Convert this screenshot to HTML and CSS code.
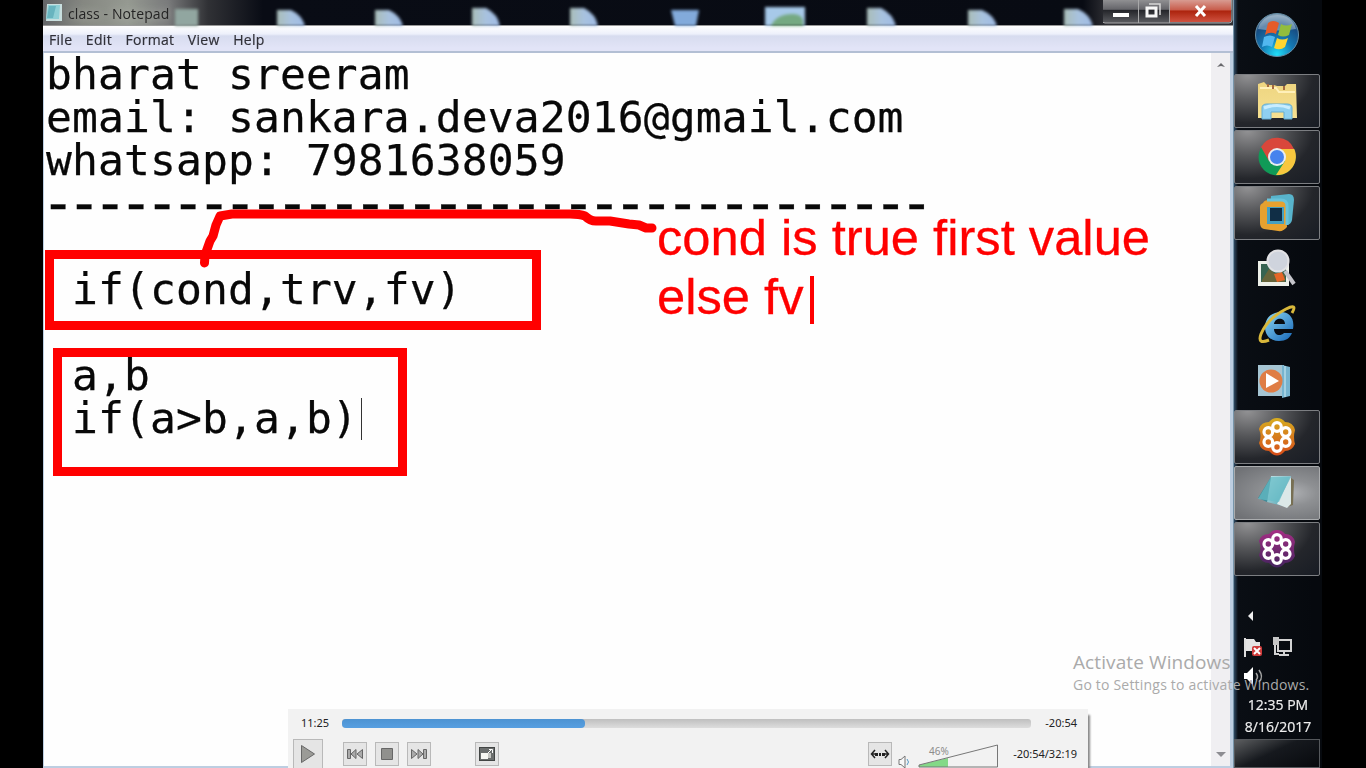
FILE: index.html
```html
<!DOCTYPE html>
<html lang="en">
<head>
<meta charset="utf-8">
<title>class - Notepad</title>
<link rel="stylesheet" href="styles.css">
</head>
<body>
<div class="screen">
  <main class="notepad">
    <header class="titlebar">
      <svg class="desktop" width="1190" height="26" viewBox="43 0 1190 26">
        <defs><linearGradient id="doc"><stop offset="0" stop-color="#a9bdb8"/><stop offset=".5" stop-color="#a8c2df"/><stop offset="1" stop-color="#9fbbe5"/></linearGradient></defs>
        <g fill="url(#doc)">
          <path d="M175 9h23v17h-23z" fill="#91a6a0"/>
          <path d="M277 10h14q11 5 14 16h-28z"/><path d="M375 10h14q11 5 14 16h-28z"/><path d="M472 8h14q12 6 14 18h-28z"/><path d="M570 8h14q12 6 14 18h-28z"/>
          <path d="M671 10h28l-3 16h-21z" fill="#82aadb"/>
          <path d="M765 7h40v19h-40z" fill="#a7c9e9"/><path d="M771 26q5-12 22-12 8 0 10 6v6z" fill="#75a982"/>
          <path d="M867 8h14q12 6 15 18h-29z"/><path d="M968 10h14q12 5 15 16h-29z"/><path d="M1064 9h14q12 5 15 17h-29z"/>
        </g>
      </svg>
      <svg class="app-icon" width="18" height="20" viewBox="0 0 18 20"><path d="M2 1h15v17H1z" fill="#c9dfdf"/><path d="M3 2h12l-1 14H1z" fill="#8fcfd5"/><path d="M4 3h7l-3 12H2z" fill="#68b4bf"/></svg>
      <h1 class="title">class - Notepad</h1>
      <div class="controls">
        <svg width="130" height="25" viewBox="0 0 130 25">
          <defs><linearGradient id="ctl" x2="0" y2="1"><stop stop-color="#99999b"/><stop offset=".45" stop-color="#65656a"/><stop offset=".5" stop-color="#25262b"/><stop offset="1" stop-color="#5c5d61"/></linearGradient><linearGradient id="cls" x2="0" y2="1"><stop stop-color="#d89b91"/><stop offset=".45" stop-color="#c85c4b"/><stop offset=".5" stop-color="#ac230d"/><stop offset="1" stop-color="#cf5240"/></linearGradient></defs>
          <path d="M-1-2h130v22q0 3-3 3H2q-3 0-3-3z" fill="url(#ctl)" stroke="#a9a9ab"/>
          <path d="M67 0h61v20q0 2-3 2H67z" fill="url(#cls)"/><path d="M35.500 0v23M66.500 0v23" stroke="#a8a8a9"/>
          <path d="M10 13h16v4H10z" fill="#fff"/>
          <path d="M44 8h9v8h-9z" fill="none" stroke="#f7f7f7" stroke-width="3"/><path d="M46 4h11v11" fill="none" stroke="#d7d7d7" stroke-width="1.500"/>
          <path d="M93 6l9 10M102 6l-9 10" stroke="#fff" stroke-width="3"/>
        </svg>
      </div>
    </header>
    <nav class="menu"><span>File</span><span>Edit</span><span>Format</span><span>View</span><span>Help</span></nav>
    <section class="document">
      <pre class="copy">bharat sreeram
email: sankara.deva2016@gmail.com
whatsapp: 7981638059
<span class="rule">----------------------------------</span>

 if(cond,trv,fv)

 a,b
 if(a&gt;b,a,b)<i class="caret"></i></pre>
      <aside class="scrollbar"><svg width="10" height="6" viewBox="0 0 10 6"><path d="M1 5l4-4 4 4-4-1z" fill="#68686c"/></svg><svg width="10" height="6" viewBox="0 0 10 6"><path d="M0 1h10L5 6z" fill="#8d8d92"/></svg></aside>
    </section>
  </main>
  <aside class="taskbar">
    <svg width="0" height="0" class="defs"><defs>
      <radialGradient id="orb" cx=".5" cy=".95" r=".95"><stop stop-color="#20def8"/><stop offset=".4" stop-color="#1579b3"/><stop offset=".75" stop-color="#174d83"/><stop offset="1" stop-color="#8ca5b8"/></radialGradient>
      <linearGradient id="folder" x2="0" y2="1"><stop stop-color="#eed580"/><stop offset="1" stop-color="#f5e092"/></linearGradient>
      <linearGradient id="ie" x2="1" y2="1"><stop stop-color="#8dd8f4"/><stop offset="1" stop-color="#1565b7"/></linearGradient>
      <linearGradient id="note" x2="1" y2="1"><stop stop-color="#c3e4e8"/><stop offset="1" stop-color="#479dac"/></linearGradient>
      <linearGradient id="gold" x2="0" y2="1"><stop stop-color="#d7ad20"/><stop offset="1" stop-color="#d64c19"/></linearGradient>
      <linearGradient id="purple" x2="0" y2="1"><stop stop-color="#a62e85"/><stop offset="1" stop-color="#44235f"/></linearGradient>
      <g id="petals" fill="none" stroke="#fff" stroke-width="3.200"><circle cx="20" cy="10" r="4.300"/><circle cx="28.700" cy="15" r="4.300"/><circle cx="28.700" cy="25" r="4.300"/><circle cx="20" cy="30" r="4.300"/><circle cx="11.300" cy="25" r="4.300"/><circle cx="11.300" cy="15" r="4.300"/></g>
    </defs></svg>
    <div class="start"><svg width="46" height="46" viewBox="0 0 46 46"><circle cx="23" cy="23" r="21.500" fill="url(#orb)" stroke="#648da6"/><path d="M4 17Q8 3 23 3t19 14q-19 3-38 0" fill="#c4d5e2" opacity=".45"/><path d="M14 11q5-4 11 0l-3 11q-6-3-11 1z" fill="#e55b2a"/><path d="M27 12q5 3 11 0l-3 11q-6 3-11 0z" fill="#92bd3d"/><path d="M10 25q6-3 11 0l-3 10q-5-3-10 0z" fill="#52b8ef"/><path d="M23 26q5 3 11 0l-3 9q-5 4-11 1z" fill="#ffd52f"/></svg></div>
    <div class="task"><svg width="42" height="42" viewBox="0 0 42 42"><path d="M2 4l6-2 3 3h7l3 1h8l2-2h9l1 34H2z" fill="url(#folder)"/><path d="M4 8h16l3 4h16" stroke="#fff0b9" stroke-width="2" fill="none"/><path d="M12 4v3M17 5v4M28 6v4" stroke="#a66b40" stroke-width="2"/><path d="M6 39V28q0-4 5-4h20q5 0 5 4v11h-8v-7H15v7z" fill="#8fd0f0" stroke="#65aed3"/><path d="M8 28q13-5 26 0" stroke="#c8edff" stroke-width="3" fill="none"/></svg></div>
    <div class="task"><svg width="40" height="40" viewBox="0 0 40 40"><circle cx="20" cy="20" r="18.500" fill="#109a57"/><path d="M4 10A18.500 18.500 0 0 1 37 12H20l-8 12z" fill="#d9473b"/><path d="M20 12h17.300A18.500 18.500 0 0 1 19 38l9-14z" fill="#f7c73e"/><circle cx="20" cy="20" r="9" fill="#e8edf0"/><circle cx="20" cy="20" r="7" fill="#4683ed"/></svg></div>
    <div class="task"><svg width="40" height="40" viewBox="0 0 40 40"><path d="M14 3l18-2q5 0 5 6l-2 20q-1 5-6 5H12z" fill="#58b4cc"/><path d="M6 10q1-3 6-3h17l1 27q-4 5-9 4L7 36q-4-1-4-6V14q0-3 3-4z" fill="#e6a12f"/><path d="M10 14h17v17H10z" fill="#459fc0"/><path d="M13 15h12v13H13z" fill="#102e46"/><path d="M10 7h14q6 0 6 6v19" fill="none" stroke="#69c3da" stroke-width="3"/></svg></div>
    <div class="task plain"><svg width="40" height="40" viewBox="0 0 40 40"><path d="M1 12h31v25H1z" fill="#edf0e9"/><path d="M4 15h25v18H4z" fill="#376451"/><path d="M5 31l7-11 8 6 8-1v8H5z" fill="#67653a"/><path d="M17 25l8-2 3 8-8 2z" fill="#e66727"/><path d="M28 22l9 13" stroke="#c5c5cb" stroke-width="4"/><circle cx="21" cy="12" r="10.500" fill="#cfd4dd" stroke="#e2e2e5" stroke-width="2"/></svg></div>
    <div class="task plain"><svg width="40" height="40" viewBox="0 0 40 40"><path fill-rule="evenodd" d="M36 24C38 13 32 7 24 7 14 7 8 14 8 22c0 9 6 14 14 14 7 0 11-3 13-8h-8c-4 4-10 2-10-4zM17 19c1-7 11-7 11 0z" fill="url(#ie)"/><path d="M35 8Q41-2 29 4 10 14 4 29q-4 11 8 6" fill="none" stroke="#d9b83b" stroke-width="3"/></svg></div>
    <div class="task plain"><svg width="40" height="40" viewBox="0 0 40 40"><path d="M1 4h26v31H1z" fill="#a6c5d3"/><path d="M25 4l8 2v29l-8 2z" fill="#77b4cf"/><path d="M28 5v31" stroke="#d2edf5"/><circle cx="14" cy="20" r="11.500" fill="#df7d45"/><path d="M9 12v15l13-7z" fill="#fff"/></svg></div>
    <div class="task"><svg width="40" height="40" viewBox="0 0 40 40"><path d="M20 1q5 0 8 4 8 0 10 8-2 7 0 14-3 7-10 7-8 9-16 0-8 0-10-8 3-7 0-14 2-7 10-7 3-4 8-4" fill="url(#gold)"/><use href="#petals"/></svg></div>
    <div class="task active"><svg width="40" height="40" viewBox="0 0 40 40"><path d="M34 5l3 2-1 25-6 2z" fill="#776f53"/><path d="M14 3h20l-4 31-20-5z" fill="url(#note)"/><path d="M34 4v27l-4 4-10-4z" fill="#dce8e8"/><path d="M14 4L1 25l9 4z" fill="#3f8b98"/><path d="M14 4h19L22 29 1 26z" fill="#67bdc8" opacity=".7"/></svg></div>
    <div class="task"><svg width="40" height="40" viewBox="0 0 40 40"><path d="M20 1q5 0 8 4 8 0 10 8-2 7 0 14-3 7-10 7-8 9-16 0-8 0-10-8 3-7 0-14 2-7 10-7 3-4 8-4" fill="url(#purple)"/><use href="#petals"/></svg></div>
    <div class="tray">
      <svg width="80" height="82" viewBox="0 0 80 82"><path d="M13 5v10l-5-5z" fill="#eee"/><path d="M5 32v19" stroke="#ddd" stroke-width="2"/><path d="M6 33h8l2 3h4v9H6z" fill="#e4e4e4"/><rect x="12" y="40" width="10" height="10" rx="2" fill="#ce3a3a"/><path d="M14 42l6 6M20 42l-6 6" stroke="#fff" stroke-width="2"/><path d="M38 34h13v11H38zM44 45v4M39 49h10M35 31v17h4" fill="none" stroke="#d3d3d3" stroke-width="2"/><path d="M33 31h6v8h-6z" fill="#c6c6c6"/><path d="M4 67h3l6-6v18l-6-6H4z" fill="#fff"/><path d="M16 67q3 4 0 7M19 64q5 7 0 12" fill="none" stroke="#a2a2a2" stroke-width="1.500"/></svg>
    </div>
    <div class="clock"><span>12:35 PM</span><span>8/16/2017</span></div>
    <div class="show-desktop"></div>
  </aside>
  <svg class="annotations" width="1366" height="768" viewBox="0 0 1366 768"><g fill="none" stroke="red" stroke-width="9"><rect x="49.500" y="254.500" width="487" height="71"/><rect x="57.500" y="352.500" width="345" height="119"/><path d="M204.500 263l.5-8 5-14 3-5 3-11 4-9 12-2h338q10 0 15 2 5 5 11 5h14l19 3 10 1 7 3h6" stroke-linecap="round" stroke-linejoin="round"/></g></svg>
  <div class="note">cond is true first value<br>else fv<i class="note-caret"></i></div>
  <div class="activation"><strong>Activate Windows</strong><span>Go to Settings to activate Windows.</span></div>
  <section class="player">
    <div class="timeline"><span class="elapsed">11:25</span><div class="track"><div class="progress"></div></div><span class="left">-20:54</span></div>
    <div class="playback">
      <button class="play"><svg width="16" height="20" viewBox="0 0 16 20"><path d="M1.500 1.500L14.500 10l-13 8.500z" fill="#9b9b97" stroke="#686868" stroke-linejoin="round"/></svg></button>
      <div class="transport">
        <button><svg width="18" height="12" viewBox="0 0 18 12"><path d="M1.500 1.500h3v9h-3zM10 1.500v9L5 6zM16.500 1.500v9L11 6z" fill="#aaa" stroke="#666" stroke-linejoin="round"/></svg></button>
        <button><svg width="14" height="14" viewBox="0 0 14 14"><path d="M1.500 1.500h11v11h-11z" fill="#90908d" stroke="#666"/></svg></button>
        <button><svg width="18" height="12" viewBox="0 0 18 12"><path d="M16.500 1.500h-3v9h3zM8 1.500v9L13 6zM1.500 1.500v9L7 6z" fill="#aaa" stroke="#666" stroke-linejoin="round"/></svg></button>
      </div>
      <button class="fullscreen"><svg width="18" height="16" viewBox="0 0 18 16"><rect x="1.500" y="1.500" width="15" height="13" fill="#6b6e6d" stroke="#424544"/><path d="M3 7h7v6H3z" fill="#f8f8f4"/><path d="M10 7h3v5h-3z" fill="#c6c7c3"/><path d="M10 7l4-4M11 3.500h3.500V7" stroke="#fff" fill="none"/></svg></button>
      <div class="audio">
        <button><svg width="20" height="10" viewBox="0 0 20 10"><path d="M5 1L1.500 5 5 9M15 1l3.500 4L15 9M2 5h3M15 5h3" fill="none" stroke="#222" stroke-width="1.500"/><path d="M5 4h3v3H5zM9 4h2v3H9zM12 4h3v3h-3z" fill="#222"/></svg></button>
        <svg class="speaker" width="12" height="14" viewBox="0 0 12 14"><path d="M1 4.500h2l4-3.500v12L3 9.500H1z" fill="#f8f8f8" stroke="#777"/><path d="M9 4q3 3 0 6" fill="none" stroke="#569ac7"/></svg>
        <svg class="volume" width="82" height="26" viewBox="0 0 82 26"><path d="M1 21l29-7v9H1z" fill="#84d987"/><path d="M1 21L79.500 1v22H1z" fill="none" stroke="#777"/><text x="11" y="11">46%</text></svg>
        <span class="remaining">-20:54/32:19</span>
      </div>
    </div>
  </section>
</div>
</body>
</html>
```
FILE: styles.css
```css
* { box-sizing: border-box; }
body { margin: 0; background: #000; overflow: hidden; }
.screen { position: relative; display: flex; width: 1366px; height: 768px; padding-left: 43px; overflow: hidden; background: #000; }
.notepad { display: flex; flex-direction: column; width: 1190px; height: 768px; }
.titlebar { position: relative; display: flex; height: 26px; background: linear-gradient(90deg, #636568 0, #858781 40px, #959991 85px, #797a7b 125px, #303135 165px, #090c15 220px, #080b13 1040px, #303035 1065px); border-bottom: 1px solid #999; }
.desktop { position: absolute; left: 0; top: 0; filter: blur(1.4px); }
.app-icon { position: relative; margin: 3px 0 0 2px; filter: blur(.6px); }
.title { position: relative; margin: 4px 0 0 5px; color: #242424; font: 14px/20px "Open Sans", sans-serif; letter-spacing: .1px; filter: blur(.45px); text-shadow: 0 0 8px #bec1b8; }
.controls { position: relative; width: 130px; height: 25px; margin-left: auto; filter: blur(.6px); }
.menu { display: flex; gap: 13.5px; height: 27px; padding: 3px 6px; color: #303038; background: linear-gradient(#fff 0, #edf0fb 8px, #d7dcef 10px, #e2e4f7 22px); border-bottom: 2px solid #b3bfd4; font: 14px/22px "Open Sans", sans-serif; letter-spacing: .3px; }
.menu span { filter: blur(.45px); -webkit-text-stroke: .2px; }
.document { display: flex; flex: 1; border: solid #bdcee1; border-width: 0 3px 2px 1px; background: #fefefe; }
.copy { flex: 1; margin: 0 0 0 2px; color: #080808; font: 43px/43px "DejaVu Sans Mono", monospace; letter-spacing: .1px; filter: blur(.5px); -webkit-text-stroke: .25px; }
.rule { display: inline-block; height: 43px; margin-left: -5px; vertical-align: top; font-size: 57px; line-height: 40px; letter-spacing: -8.3px; }
.caret { display: inline-block; width: 1px; height: 42px; margin: 1px 0 0 3px; vertical-align: top; background: #333; }
.scrollbar { display: flex; flex-direction: column; align-items: center; justify-content: space-between; width: 19px; padding: 9px 0; background: #f0eff2; }
.taskbar { display: flex; flex-direction: column; align-items: center; width: 89px; padding: 0 2px 0 0; background: linear-gradient(90deg, #304b64, #0a0e14 4px, #06090e 90%); border-left: 1px solid #7895aa; filter: blur(.6px); }
.defs { position: absolute; }
.start { display: flex; align-items: center; justify-content: center; height: 74px; flex-shrink: 0; padding-bottom: 5px; }
.task { display: flex; align-items: center; justify-content: center; flex-shrink: 0; width: 86px; height: 54px; margin-bottom: 2px; border: 1px solid #7c7e82; border-radius: 2px; background: radial-gradient(ellipse at 15% 0, #929294 0, #57585b 33%, #24262b 65%, #181c24 100%); }
.plain { border-color: transparent; background: none; }
.active { border-color: #aaacae; background: radial-gradient(ellipse at 65% 50%, #b0b2b5, #8e9093 35%, #707276 90%); }
.tray { display: flex; width: 80px; height: 82px; margin-top: 28px; margin-left: 6px; flex-shrink: 0; }
.clock { display: flex; flex-direction: column; align-items: center; height: 51px; margin-left: 2px; padding-top: 6px; color: #eee; font: 14px/22px "Open Sans", sans-serif; -webkit-text-stroke: .2px; }
.show-desktop { width: 86px; flex: 1; border: 1px solid #55585c; background: linear-gradient(155deg, #5c5e60, #16191e 45%, #07090d); }
.annotations { position: absolute; inset: 0; }
.note { position: absolute; left: 657px; top: 208px; color: red; font: 50.7px/59px "Liberation Sans", Arial, sans-serif; white-space: nowrap; -webkit-text-stroke: .3px; }
.note-caret { display: inline-block; width: 4px; height: 48px; margin: 9px 0 0 6px; vertical-align: top; background: red; }
.activation { position: absolute; left: 1073px; top: 650px; display: flex; flex-direction: column; color: #aaa; white-space: nowrap; font: 14px/20px "Open Sans", sans-serif; letter-spacing: .2px; }
.activation strong { font-size: 19px; line-height: 25px; font-weight: 400; letter-spacing: .1px; }
.player { position: absolute; left: 288px; top: 709px; width: 800px; height: 59px; color: #222; background: #f2f2f2; box-shadow: 2px 6px 2px #888; font: 11px/16px "Noto Sans", sans-serif; }
.timeline { display: flex; align-items: center; height: 28px; padding: 0 11px 0 13px; }
.left { margin-left: auto; }
.elapsed { width: 28px; }
.track { width: 689px; height: 9px; margin-left: 13px; background: linear-gradient(#bfbfbf, #ddd); border-radius: 3px; }
.progress { width: 243px; height: 9px; background: linear-gradient(#4d93d2, #579fe1); border-radius: 4px; }
.playback { display: flex; align-items: flex-start; padding: 2px 11px 0 5px; }
button { display: flex; align-items: center; justify-content: center; width: 24px; height: 24px; margin: 3px 0 0; padding: 0; border: 1px solid #b9b9b9; background: #e5e5e5; }
.play { width: 30px; height: 30px; margin: 0 20px 0 0; }
.transport { display: flex; gap: 8px; }
.fullscreen { margin-left: 44px; }
.audio { display: flex; align-items: flex-start; margin-left: auto; }
.speaker { margin: 16px 0 0 6px; }
.volume { margin: 5px 0 0 8px; }
.volume text { fill: #8c8c8c; font: 10px "Noto Sans", sans-serif; }
.remaining { margin: 7px 0 0 13px; white-space: nowrap; }
```
